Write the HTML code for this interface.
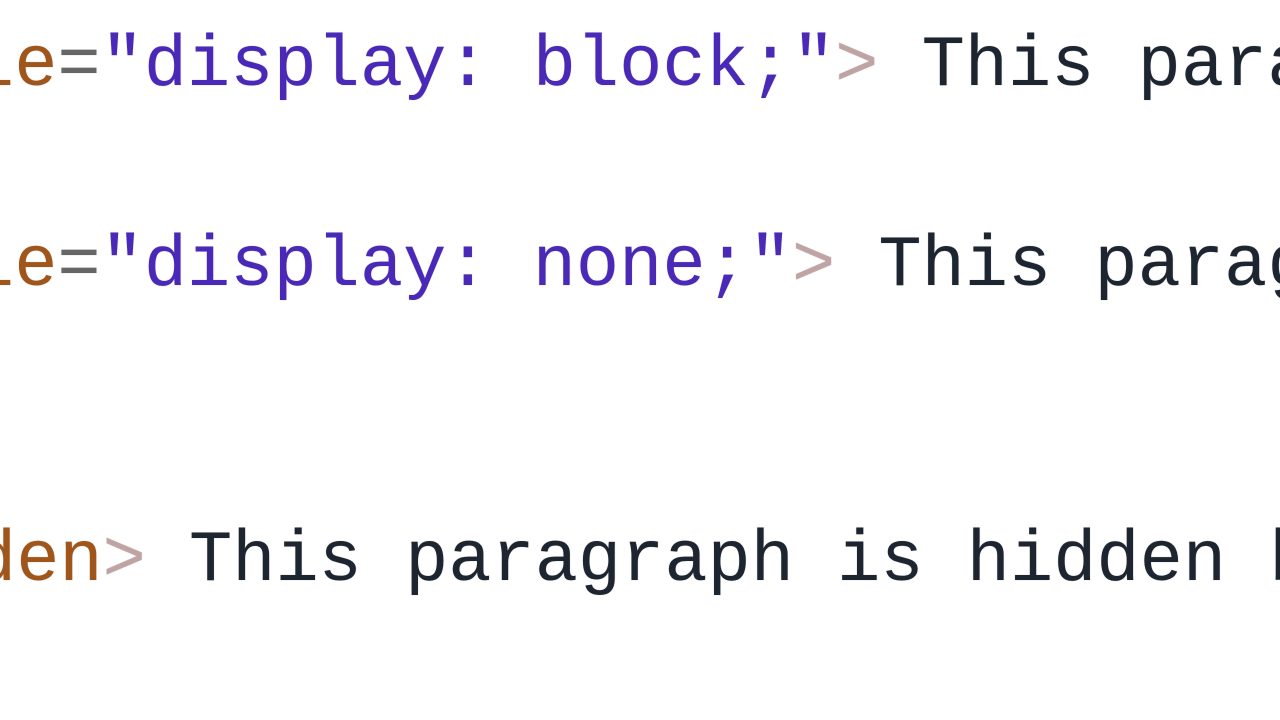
<!DOCTYPE html>
<html><head><meta charset="utf-8"><style>
html,body{margin:0;padding:0;background:#fff;width:1280px;height:720px;overflow:hidden;position:relative}
.l{position:absolute;white-space:pre;font-family:"Liberation Mono","DejaVu Sans Mono",monospace;font-size:72px;line-height:72px;color:#1d2530;text-shadow:0 0 1px rgba(0,0,0,.3)}
.w{position:absolute;left:0;width:1280px;height:100px;overflow:hidden}
.a{color:#a0551a}.e{color:#666}.s{color:#4a28b8}.g{color:#c0a4a4}
</style></head><body>
<div class="w" style="top:20px"><div class="l" style="left:-29px;top:10px"><span class="a">le</span><span class="e">=</span><span class="s">"display: block;"</span><span class="g">&gt;</span> This para</div></div>
<div class="w" style="top:220px"><div class="l" style="left:-29px;top:10px"><span class="a">le</span><span class="e">=</span><span class="s">"display: none;"</span><span class="g">&gt;</span> This parag</div></div>
<div class="w" style="top:515px"><div class="l" style="left:-27px;top:10px"><span class="a">den</span><span class="g">&gt;</span> This paragraph is hidden b</div></div>
</body></html>
